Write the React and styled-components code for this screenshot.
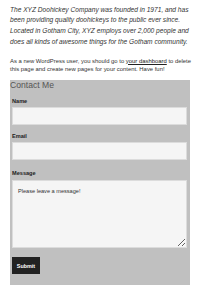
import React from 'react';
import styled, { createGlobalStyle } from 'styled-components';

const GlobalStyle = createGlobalStyle`
  body {
    margin: 0;
    background: #fff;
    font-family: "Liberation Sans", Arial, sans-serif;
  }
`;

const Page = styled.div`
  padding: 4.6px 10px 16px 10px;
  color: #333;
`;

const Intro = styled.p`
  margin: 0;
  font-size: 6.6px;
  line-height: 10.7px;
  font-style: italic;
  color: #333;
`;

const Note = styled.p`
  margin: 9.2px 0 0 0;
  font-size: 5.9px;
  line-height: 8px;
  color: #333;

  a {
    color: #222;
    text-decoration: underline;
  }
`;

const Panel = styled.form`
  margin: 7px 4px 0 0;
  background: #c0c0c0;
  padding: 0 3px 11px 2px;
  display: flex;
  flex-direction: column;
`;

const Heading = styled.h3`
  margin: 0 0 0 -2px;
  font-size: 8.6px;
  line-height: 10px;
  font-weight: 400;
  color: #555;
`;

const Field = styled.div`
  display: flex;
  flex-direction: column;
  margin-top: ${(p) => p.$gap}px;
`;

const Label = styled.label`
  font-size: 5.6px;
  line-height: 8px;
  font-weight: 700;
  color: #222;
  margin-bottom: 2.6px;
`;

const Input = styled.input`
  box-sizing: border-box;
  width: 100%;
  height: 17.6px;
  margin: 0;
  border: 1px solid #dcdcdc;
  background: #f5f5f5;
  padding: 0 5px;
  font-family: inherit;
  font-size: 5.6px;
`;

const TextArea = styled.textarea`
  box-sizing: border-box;
  width: 100%;
  height: 68px;
  margin: 0;
  border: 1px solid #dcdcdc;
  background: #f5f5f5;
  padding: 7px 5px;
  font-family: inherit;
  font-size: 5.6px;
  line-height: 7px;
  color: #333;
`;

const Submit = styled.button`
  align-self: flex-start;
  margin-top: 9.6px;
  width: 28px;
  height: 17px;
  padding: 0;
  border: none;
  background: #222;
  color: #fff;
  font-family: inherit;
  font-size: 5.4px;
  font-weight: 700;
`;

export default function App() {
  return (
    <>
      <GlobalStyle />
      <Page>
        <Intro>
          The XYZ Doohickey Company was founded in 1971, and has been providing
          quality doohickeys to the public ever since. Located in Gotham City,
          XYZ employs over 2,000 people and does all kinds of awesome things for
          the Gotham community.
        </Intro>
        <Note>
          As a new WordPress user, you should go to <a href="#">your dashboard</a> to
          delete this page and create new pages for your content. Have fun!
        </Note>
        <Panel onSubmit={(e) => e.preventDefault()}>
          <Heading>Contact Me</Heading>
          <Field $gap={7}>
            <Label>Name</Label>
            <Input type="text" />
          </Field>
          <Field $gap={6.8}>
            <Label>Email</Label>
            <Input type="email" />
          </Field>
          <Field $gap={9.4}>
            <Label>Message</Label>
            <TextArea defaultValue="Please leave a message!" />
          </Field>
          <Submit type="submit">Submit</Submit>
        </Panel>
      </Page>
    </>
  );
}
